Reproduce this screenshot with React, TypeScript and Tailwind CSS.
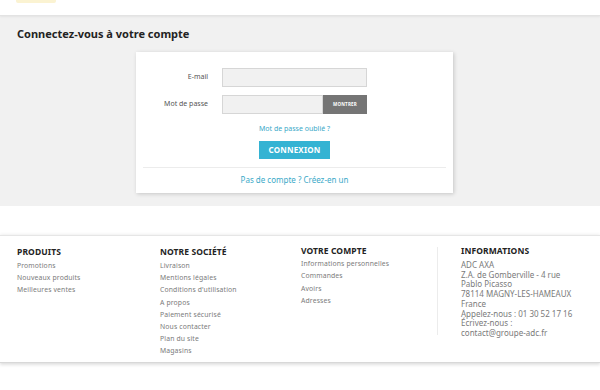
import React from "react";

const produits = ["Promotions", "Nouveaux produits", "Meilleures ventes"];
const societe = [
  "Livraison",
  "Mentions légales",
  "Conditions d'utilisation",
  "A propos",
  "Paiement sécurisé",
  "Nous contacter",
  "Plan du site",
  "Magasins",
];
const compte = ["Informations personnelles", "Commandes", "Avoirs", "Adresses"];
const infos = [
  "ADC AXA",
  "Z.A. de Gomberville - 4 rue",
  "Pablo Picasso",
  "78114 MAGNY-LES-HAMEAUX",
  "France",
  "Appelez-nous : 01 30 52 17 16",
  "Écrivez-nous :",
  "contact@groupe-adc.fr",
];

function LinkCol({ title, items, className }: { title: string; items: string[]; className: string }) {
  return (
    <div className={className}>
      <div className="text-[8.5px] leading-[12px] font-bold text-[#232323] tracking-[0.1px]">{title}</div>
      <ul className="flex flex-col mt-[2px]">
        {items.map((t) => (
          <li key={t} className="text-[6.8px] leading-[12.2px] text-[#7a7a7a] tracking-[0.15px]">
            {t}
          </li>
        ))}
      </ul>
    </div>
  );
}

export default function App() {
  return (
    <div className="w-[600px] h-[390px] overflow-hidden bg-white font-['Noto_Sans','Open_Sans',sans-serif]">
      {/* header */}
      <div className="h-[16px] bg-white relative border-b border-[#e3e3e3] shadow-[0_1px_2px_rgba(0,0,0,0.06)]">
        <div className="absolute left-[16px] top-0 w-[40px] h-[3px] rounded-b-[2px] bg-[#fbf3d2]" />
      </div>

      {/* main */}
      <div className="bg-[#f1f1f1] pt-[11px] pb-[13px] h-[190px]">
        <h1 className="pl-[17px] text-[11px] leading-[14px] font-bold text-[#232323]">
          Connectez-vous à votre compte
        </h1>
        <div className="mt-[11px] ml-[136px] w-[317px] h-[141px] bg-white shadow-[1px_1px_4px_rgba(0,0,0,0.18)] pt-[16px] px-[7px] flex flex-col">
          <div className="flex items-center h-[19px]">
            <label className="w-[65px] text-right text-[7px] text-[#555]">E-mail</label>
            <div className="ml-[14px] w-[145px] h-[19px] bg-[#f1f1f1] border border-[#d6d6d6]" />
          </div>
          <div className="flex items-center h-[19px] mt-[8px]">
            <label className="w-[65px] text-right text-[7px] text-[#555]">Mot de passe</label>
            <div className="ml-[14px] flex h-[19px]">
              <div className="w-[101px] h-[19px] bg-[#f1f1f1] border border-[#d6d6d6]" />
              <div className="w-[44px] h-[19px] bg-[#757575] text-white text-[4.5px] font-bold flex items-center justify-center tracking-[0.2px]">
                MONTRER
              </div>
            </div>
          </div>
          <div className="mt-[10px] text-center text-[7px] leading-[10px] text-[#3aa9c8]">Mot de passe oublié ?</div>
          <div className="mt-[7px] flex justify-center">
            <div className="w-[71px] h-[18px] bg-[#34b3d3] text-white text-[8px] font-bold flex items-center justify-center tracking-[0.2px]">
              CONNEXION
            </div>
          </div>
          <div className="mt-[8px] border-t border-[#ececec]" />
          <div className="mt-[6px] text-center text-[8px] leading-[12px] text-[#3aa9c8]">Pas de compte ? Créez-en un</div>
        </div>
      </div>

      {/* gap */}
      <div className="h-[29px] bg-white" />

      {/* footer */}
      <div className="h-[128px] bg-white border-t border-[#e6e6e6] shadow-[0_-1px_3px_rgba(0,0,0,0.06),0_2px_3px_rgba(0,0,0,0.12)] border-b border-b-[#d8d8d8] flex pl-[17px] pt-[10px]">
        <LinkCol title="PRODUITS" items={produits} className="w-[143px]" />
        <LinkCol title="NOTRE SOCIÉTÉ" items={societe} className="w-[141px]" />
        <div className="w-[136px] -mt-[1px]">
          <div className="text-[8.5px] leading-[12px] font-bold text-[#232323] tracking-[0.1px]">VOTRE COMPTE</div>
          <ul className="flex flex-col mt-[1px]">
            {compte.map((t) => (
              <li key={t} className="text-[6.8px] leading-[12.3px] text-[#7a7a7a] tracking-[0.15px]">
                {t}
              </li>
            ))}
          </ul>
        </div>
        <div className="mt-[1px] w-px h-[88px] bg-[#ececec]" />
        <div className="ml-[23px] -mt-[1px]">
          <div className="text-[8.5px] leading-[12px] font-bold text-[#232323] tracking-[0.1px]">INFORMATIONS</div>
          <div className="mt-[3px] flex flex-col">
            {infos.map((t) => (
              <div key={t} className="text-[8px] leading-[9.7px] text-[#7a7a7a]">
                {t}
              </div>
            ))}
          </div>
        </div>
      </div>
    </div>
  );
}
